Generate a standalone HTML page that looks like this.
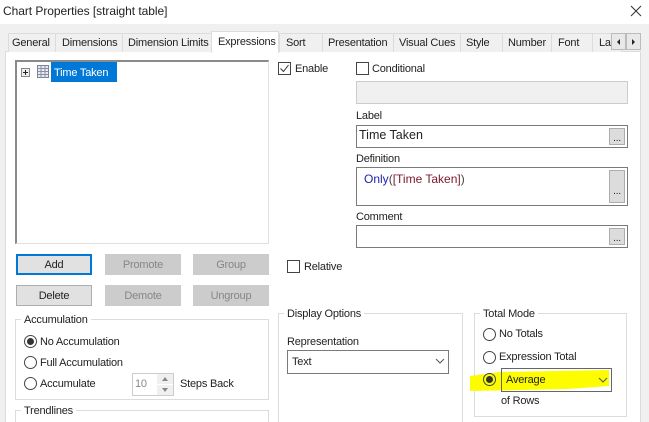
<!DOCTYPE html>
<html style="width:649px;height:422px;overflow:hidden"><head><meta charset="utf-8"><style>
html,body{margin:0;padding:0}
body{width:649px;height:422px;position:relative;overflow:hidden;background:#f0f0f0;font-family:"Liberation Sans",sans-serif;font-size:11px;letter-spacing:-.2px;color:#222}
.a{position:absolute;box-sizing:border-box}
.t{position:absolute;white-space:nowrap;line-height:14px;margin-top:1px}
.tab{position:absolute;top:33px;height:19px;background:#f0f0f0;border:1px solid #dcdcdc;border-bottom:none;box-sizing:border-box;text-align:left;line-height:19px;white-space:nowrap;overflow:hidden}
.box{position:absolute;box-sizing:border-box;border:1px solid #7a7a7a;background:#fff}
.dots{position:absolute;box-sizing:border-box;background:#dcdcdc;border:1px solid #adadad;text-align:center;font-size:10px;line-height:14px}
.btn{position:absolute;box-sizing:border-box;width:76px;height:21px;text-align:center;line-height:21px;background:#e1e1e1;border:1px solid #adadad}
.dis{background:#ccc;border-color:#ccc;color:#868686}
.grp{position:absolute;box-sizing:border-box;border:1px solid #dcdcdc}
.leg{position:absolute;background:#fff;padding:0 3px;white-space:nowrap;line-height:14px;margin-top:1px}
.r{position:absolute;box-sizing:border-box;width:13px;height:13px;border:1px solid #444;border-radius:50%;background:#fff}
.r.on:after{content:"";position:absolute;left:2px;top:2px;width:7px;height:7px;border-radius:50%;background:#333}
.c{position:absolute;box-sizing:border-box;width:13px;height:13px;border:1px solid #444;background:#fff}
</style></head><body>
<div class="a" style="left:0;top:0;width:649px;height:24px;background:#fff"></div>
<div class="t" style="left:3px;top:3px;font-size:12px;letter-spacing:-.05px">Chart Properties [straight table]</div>
<svg class="a" style="left:630px;top:5px" width="12" height="12"><path d="M1 1L11 11M11 1L1 11" stroke="#333" stroke-width="1" fill="none"/></svg>

<div class="a" style="left:5px;top:51px;width:636px;height:371px;background:#fff;border:1px solid #dcdcdc;border-bottom:none"></div>
<div class="tab" style="left:8px;width:48px;padding-left:3px">General</div>
<div class="tab" style="left:55px;width:68px;padding-left:6px">Dimensions</div>
<div class="tab" style="left:122px;width:90px;padding-left:5px">Dimension Limits</div>
<div class="tab" style="left:279px;width:44px;padding-left:6px">Sort</div>
<div class="tab" style="left:322px;width:72px;padding-left:5px">Presentation</div>
<div class="tab" style="left:393px;width:68px;padding-left:5px">Visual Cues</div>
<div class="tab" style="left:460px;width:43px;padding-left:5px">Style</div>
<div class="tab" style="left:502px;width:50px;padding-left:5px">Number</div>
<div class="tab" style="left:551px;width:42px;padding-left:6px">Font</div>
<div class="tab" style="left:592px;width:30px;padding-left:6px">La</div>
<div class="tab" style="left:211px;top:31px;height:22px;width:68px;background:#fff;padding-left:6px;line-height:20px">Expressions</div>
<div class="a" style="left:611px;top:33px;width:15px;height:17px;background:#e8e8e8;border:1px solid #bbb"><svg style="position:absolute;left:4px;top:4px" width="6" height="8"><path d="M4 1V7L1 4Z" fill="#222"/></svg></div>
<div class="a" style="left:626px;top:33px;width:15px;height:17px;background:#e8e8e8;border:1px solid #bbb"><svg style="position:absolute;left:4px;top:4px" width="6" height="8"><path d="M1 1V7L4 4Z" fill="#222"/></svg></div>

<div class="a" style="left:15px;top:60px;width:254px;height:184px;background:#fff;border:1px solid #e0e0e0;border-top:2px solid #8a8a8a;border-left:2px solid #8a8a8a"></div>
<div class="a" style="left:21px;top:68px;width:9px;height:9px;border:1px solid #888;background:#eee"></div>
<div class="a" style="left:23px;top:72px;width:5px;height:1px;background:#222"></div>
<div class="a" style="left:25px;top:70px;width:1px;height:5px;background:#222"></div>
<svg class="a" style="left:37px;top:65px" width="12" height="13"><rect x=".5" y=".5" width="11" height="12" fill="#e8eaf2" stroke="#7a8296"/><path d="M.5 3.5H11.5M.5 6.5H11.5M.5 9.5H11.5M4 .5V12.5M8 .5V12.5" stroke="#8a90a4" fill="none"/></svg>
<div class="a" style="left:51px;top:62px;width:66px;height:20px;background:#0078d7"></div>
<div class="t" style="left:54px;top:65px;color:#fff">Time Taken</div>

<div class="c" style="left:278px;top:62px"></div>
<svg class="a" style="left:279px;top:63px" width="11" height="11"><path d="M1.5 5.5L4.5 8.5L9.5 2" stroke="#333" fill="none"/></svg>
<div class="t" style="left:295px;top:61px">Enable</div>
<div class="c" style="left:356px;top:62px"></div>
<div class="t" style="left:372px;top:61px">Conditional</div>
<div class="a" style="left:356px;top:81px;width:272px;height:23px;background:#f0f0f0;border:1px solid #ccc"></div>

<div class="t" style="left:356px;top:108px">Label</div>
<div class="box" style="left:356px;top:125px;width:272px;height:23px"></div>
<div class="t" style="left:359px;top:127px;font-size:12.5px;letter-spacing:0">Time Taken</div>
<div class="dots" style="left:609px;top:128px;width:16px;height:17px;line-height:20px">...</div>
<div class="t" style="left:356px;top:151px">Definition</div>
<div class="box" style="left:356px;top:167px;width:272px;height:39px"></div>
<div class="t" style="left:364px;top:171px;font-size:12px;letter-spacing:0"><span style="color:#2222b0">Only</span><span style="color:#444">(</span><span style="color:#801830">[Time Taken]</span><span style="color:#444">)</span></div>
<div class="dots" style="left:609px;top:170px;width:16px;height:33px;line-height:42px">...</div>
<div class="t" style="left:356px;top:209px">Comment</div>
<div class="box" style="left:356px;top:225px;width:272px;height:23px"></div>
<div class="dots" style="left:609px;top:228px;width:16px;height:17px;line-height:20px">...</div>

<div class="c" style="left:287px;top:260px"></div>
<div class="t" style="left:304px;top:259px">Relative</div>

<div class="btn" style="left:16px;top:254px;border:2px solid #0078d7;line-height:19px">Add</div>
<div class="btn dis" style="left:105px;top:254px">Promote</div>
<div class="btn dis" style="left:193px;top:254px">Group</div>
<div class="btn" style="left:16px;top:285px">Delete</div>
<div class="btn dis" style="left:105px;top:285px">Demote</div>
<div class="btn dis" style="left:193px;top:285px">Ungroup</div>

<div class="grp" style="left:15px;top:319px;width:254px;height:81px"></div>
<div class="leg" style="left:21px;top:312px">Accumulation</div>
<div class="r on" style="left:24px;top:335px"></div>
<div class="t" style="left:40px;top:334px">No Accumulation</div>
<div class="r" style="left:24px;top:356px"></div>
<div class="t" style="left:40px;top:355px">Full Accumulation</div>
<div class="r" style="left:24px;top:377px"></div>
<div class="t" style="left:40px;top:376px">Accumulate</div>
<div class="a" style="left:132px;top:373px;width:42px;height:23px;border:1px solid #ccc;background:#fff"></div>
<div class="t" style="left:135px;top:376px;color:#888">10</div>
<div class="a" style="left:157px;top:374px;width:16px;height:10px;background:#f0f0f0"><svg style="position:absolute;left:4px;top:3px" width="8" height="5"><path d="M4 0L7 4H1Z" fill="#888"/></svg></div>
<div class="a" style="left:157px;top:385px;width:16px;height:10px;background:#f0f0f0"><svg style="position:absolute;left:4px;top:3px" width="8" height="5"><path d="M4 4L7 0H1Z" fill="#888"/></svg></div>
<div class="t" style="left:180px;top:376px">Steps Back</div>

<div class="grp" style="left:15px;top:410px;width:254px;height:12px;border-bottom:none"></div>
<div class="leg" style="left:21px;top:403px">Trendlines</div>

<div class="grp" style="left:278px;top:313px;width:185px;height:109px;border-bottom:none"></div>
<div class="leg" style="left:284px;top:306px">Display Options</div>
<div class="t" style="left:287px;top:334px">Representation</div>
<div class="box" style="left:287px;top:350px;width:162px;height:24px"></div>
<div class="t" style="left:292px;top:354px">Text</div>
<svg class="a" style="left:435px;top:358px" width="10" height="7"><path d="M1 1L5 5L9 1" stroke="#555" fill="none"/></svg>

<div class="grp" style="left:474px;top:313px;width:153px;height:104px"></div>
<div class="leg" style="left:480px;top:306px">Total Mode</div>
<div class="r" style="left:483px;top:328px"></div>
<div class="t" style="left:499px;top:326px">No Totals</div>
<div class="r" style="left:483px;top:351px"></div>
<div class="t" style="left:499px;top:349px">Expression Total</div>
<svg class="a" style="left:468px;top:366px" width="146" height="28"><path d="M2 10L32 6L141 4L141 20L100 23L2 25Z" fill="#fdfd00"/></svg>
<div class="r on" style="left:483px;top:373px;background:#fdfd00"></div>
<div class="a" style="left:501px;top:368px;width:111px;height:24px;border:1px solid #666"></div>
<div class="t" style="left:506px;top:372px">Average</div>
<svg class="a" style="left:598px;top:377px" width="10" height="7"><path d="M1 1L5 5L9 1" stroke="#555" fill="none"/></svg>
<div class="t" style="left:501px;top:393px">of Rows</div>
</body></html>
